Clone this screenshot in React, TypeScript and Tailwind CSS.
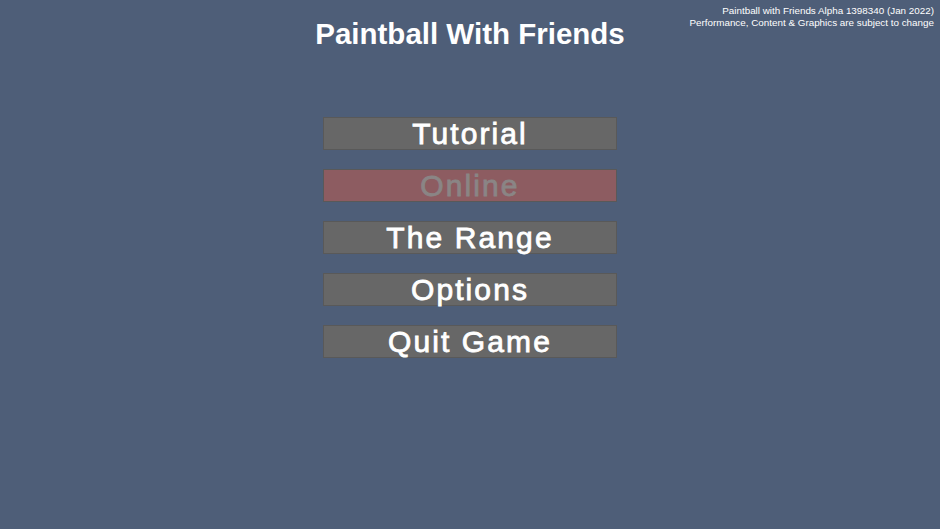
import React from "react";

const buttons = [
  { label: "Tutorial", disabled: false },
  { label: "Online", disabled: true },
  { label: "The Range", disabled: false },
  { label: "Options", disabled: false },
  { label: "Quit Game", disabled: false },
];

export default function App() {
  return (
    <div className="relative w-[940px] h-[529px] bg-[#4e5e78] overflow-hidden font-['Liberation_Sans',Arial,sans-serif]">
      {/* version notice */}
      <div className="absolute top-[5px] right-[6px] text-right text-[9.85px] leading-[12px] text-white">
        <p>Paintball with Friends Alpha 1398340 (Jan 2022)</p>
        <p>Performance, Content &amp; Graphics are subject to change</p>
      </div>

      <div className="flex flex-col items-center pt-[15px]">
        <h1 className="text-[29.5px] leading-[38px] font-bold text-white">Paintball With Friends</h1>

        <div className="mt-[64px] flex flex-col gap-[19px]">
          {buttons.map((b) => (
            <button
              key={b.label}
              disabled={b.disabled}
              className={`w-[294px] h-[33px] flex items-center justify-center border border-[#595959] text-[30px] font-normal tracking-[2.1px] leading-none pt-[1px] [-webkit-text-stroke:0.8px_currentColor] ${
                b.disabled ? "bg-[#8d5c61] text-[#8a8585]" : "bg-[#676767] text-white"
              }`}
            >
              {b.label}
            </button>
          ))}
        </div>
      </div>
    </div>
  );
}
